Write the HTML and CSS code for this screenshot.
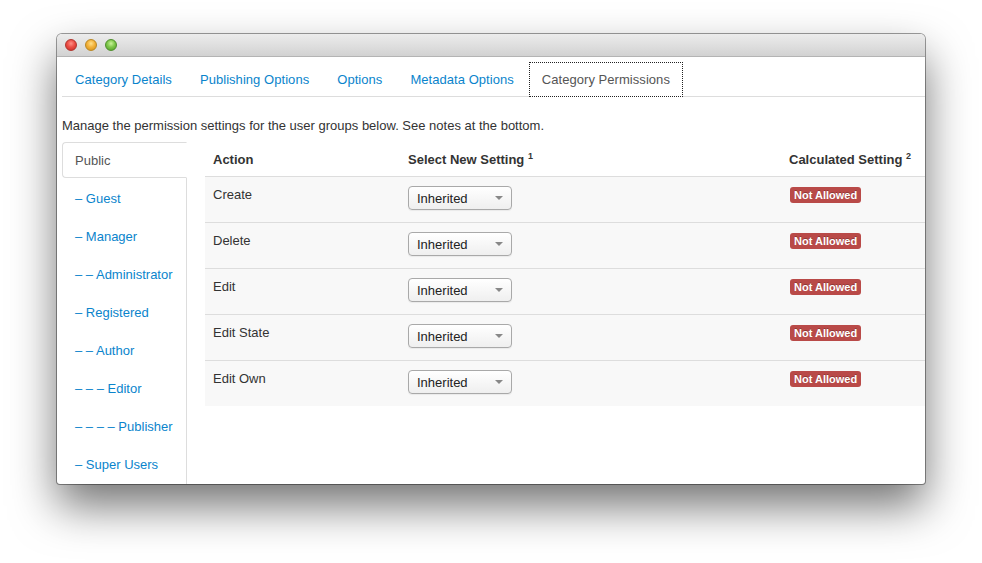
FILE: index.html
```html
<!DOCTYPE html>
<html>
<head>
<meta charset="utf-8">
<link rel="stylesheet" href="styles.css">
</head>
<body>
<div class="window">
  <div class="titlebar">
    <span class="light red"></span>
    <span class="light yellow"></span>
    <span class="light green"></span>
  </div>
  <div class="content">
    <ul class="tabs">
      <li><a>Category Details</a></li>
      <li><a>Publishing Options</a></li>
      <li><a>Options</a></li>
      <li><a>Metadata Options</a></li>
      <li class="active"><a>Category Permissions</a></li>
    </ul>
    <p class="intro">Manage the permission settings for the user groups below. See notes at the bottom.</p>
    <div class="perm">
      <ul class="groups">
        <li class="active"><a>Public</a></li>
        <li><a>&ndash; Guest</a></li>
        <li><a>&ndash; Manager</a></li>
        <li><a>&ndash; &ndash; Administrator</a></li>
        <li><a>&ndash; Registered</a></li>
        <li><a>&ndash; &ndash; Author</a></li>
        <li><a>&ndash; &ndash; &ndash; Editor</a></li>
        <li><a>&ndash; &ndash; &ndash; &ndash; Publisher</a></li>
        <li><a>&ndash; Super Users</a></li>
      </ul>
      <table class="rules">
        <thead>
          <tr>
            <th class="c1">Action</th>
            <th class="c2">Select New Setting <sup>1</sup></th>
            <th class="c3">Calculated Setting <sup>2</sup></th>
          </tr>
        </thead>
        <tbody>
          <tr><td>Create</td><td><div class="select">Inherited<span class="caret"></span></div></td><td><span class="badge">Not Allowed</span></td></tr>
          <tr><td>Delete</td><td><div class="select">Inherited<span class="caret"></span></div></td><td><span class="badge">Not Allowed</span></td></tr>
          <tr><td>Edit</td><td><div class="select">Inherited<span class="caret"></span></div></td><td><span class="badge">Not Allowed</span></td></tr>
          <tr><td>Edit State</td><td><div class="select">Inherited<span class="caret"></span></div></td><td><span class="badge">Not Allowed</span></td></tr>
          <tr><td>Edit Own</td><td><div class="select">Inherited<span class="caret"></span></div></td><td><span class="badge">Not Allowed</span></td></tr>
        </tbody>
      </table>
    </div>
  </div>
</div>
</body>
</html>
```
FILE: styles.css
```css
html, body {
  margin: 0;
  padding: 0;
  background: #ffffff;
}
body {
  font-family: "Liberation Sans", Arial, sans-serif;
  font-size: 13px;
  color: #333333;
  padding-top: 34px;
  padding-left: 57px;
  height: 563px;
  box-sizing: border-box;
  overflow: hidden;
}
.window {
  width: 868px;
  height: 450px;
  background: #ffffff;
  border-radius: 5px 5px 3px 3px;
  overflow: hidden;
  box-shadow: 0 0 0 1px rgba(0,0,0,0.38), 0 22px 45px rgba(0,0,0,0.55);
  display: flex;
  flex-direction: column;
}
.titlebar {
  height: 22px;
  flex: none;
  background: linear-gradient(#ececec, #d2d2d2);
  border-bottom: 1px solid #b4b4b4;
  display: flex;
  align-items: center;
  gap: 8px;
  padding-left: 8px;
}
.light {
  width: 12px;
  height: 12px;
  border-radius: 50%;
  box-sizing: border-box;
}
.red {
  background: radial-gradient(circle at 50% 35%, #ff8f86 0%, #ec4e45 45%, #c42b24 100%);
  border: 1px solid #b0332c;
}
.yellow {
  background: radial-gradient(circle at 50% 35%, #ffe08a 0%, #f3b23a 45%, #d18e17 100%);
  border: 1px solid #b98722;
}
.green {
  background: radial-gradient(circle at 50% 35%, #c9f29a 0%, #7fc84a 45%, #4f9a26 100%);
  border: 1px solid #4e8e2b;
}
.content {
  flex: 1;
  display: flex;
  flex-direction: column;
  padding: 5px 0 0 5px;
  min-height: 0;
}
.tabs {
  list-style: none;
  margin: 0;
  padding: 0;
  display: flex;
  border-bottom: 1px solid #dddddd;
  height: 34px;
}
.tabs li {
  margin-right: 2px;
  margin-bottom: -1px;
}
.tabs a {
  display: block;
  padding: 8px 12px 7px;
  line-height: 18px;
  border: 1px solid transparent;
  color: #0a84cc;
  letter-spacing: 0.05px;
}
.tabs li.active a {
  color: #555555;
  background: #ffffff;
  border: 1px dotted #222222;
}
.intro {
  margin: 20px 0 7px;
  line-height: 18px;
}
.perm {
  flex: 1;
  display: flex;
  align-items: stretch;
  min-height: 0;
}
.groups {
  list-style: none;
  margin: 0;
  padding: 0;
  width: 124px;
  flex: none;
  border-right: 1px solid #dddddd;
}
.groups li {
  margin-bottom: 2px;
}
.groups a {
  display: block;
  padding: 9px 12px 7px;
  line-height: 18px;
  border: 1px solid transparent;
  color: #0a84cc;
  white-space: nowrap;
}
.groups li.active a {
  color: #555555;
  border-color: #dddddd;
  border-right-color: transparent;
  border-radius: 4px 0 0 4px;
  margin-right: -1px;
  background: #ffffff;
}
.rules {
  margin-left: 18px;
  border-collapse: collapse;
  width: 760px;
  flex: none;
  align-self: flex-start;
  table-layout: fixed;
}
.rules th {
  text-align: left;
  font-weight: bold;
  padding: 9px 8px 7px;
  line-height: 18px;
  vertical-align: top;
  white-space: nowrap;
}
.rules th sup {
  font-size: 9px;
  line-height: 0;
  vertical-align: 5px;
}
.rules .c1 { width: 179px; }
.rules .c2 { width: 365px; }
.rules td {
  padding: 9px 8px 7px;
  line-height: 18px;
  vertical-align: top;
  border-top: 1px solid #dddddd;
  background: #f8f8f8;
}
.select {
  position: relative;
  width: 104px;
  height: 24px;
  box-sizing: border-box;
  margin: 0 0 5px;
  border: 1px solid #a9a9a9;
  border-radius: 4px;
  background: linear-gradient(#ffffff, #efefef);
  padding-left: 8px;
  line-height: 23px;
  color: #222222;
  box-shadow: 0 1px 1px rgba(0,0,0,0.06);
}
.caret {
  position: absolute;
  right: 8px;
  top: 9px;
  width: 0;
  height: 0;
  border-left: 4px solid transparent;
  border-right: 4px solid transparent;
  border-top: 4px solid #888888;
}
.badge {
  display: inline-block;
  margin-top: 1px;
  margin-left: 1px;
  background: #b94a48;
  color: #ffffff;
  font-weight: bold;
  font-size: 11px;
  line-height: 14px;
  padding: 1px 4px;
  border-radius: 3px;
  vertical-align: top;
  text-shadow: 0 -1px 0 rgba(0,0,0,0.25);
}
```
